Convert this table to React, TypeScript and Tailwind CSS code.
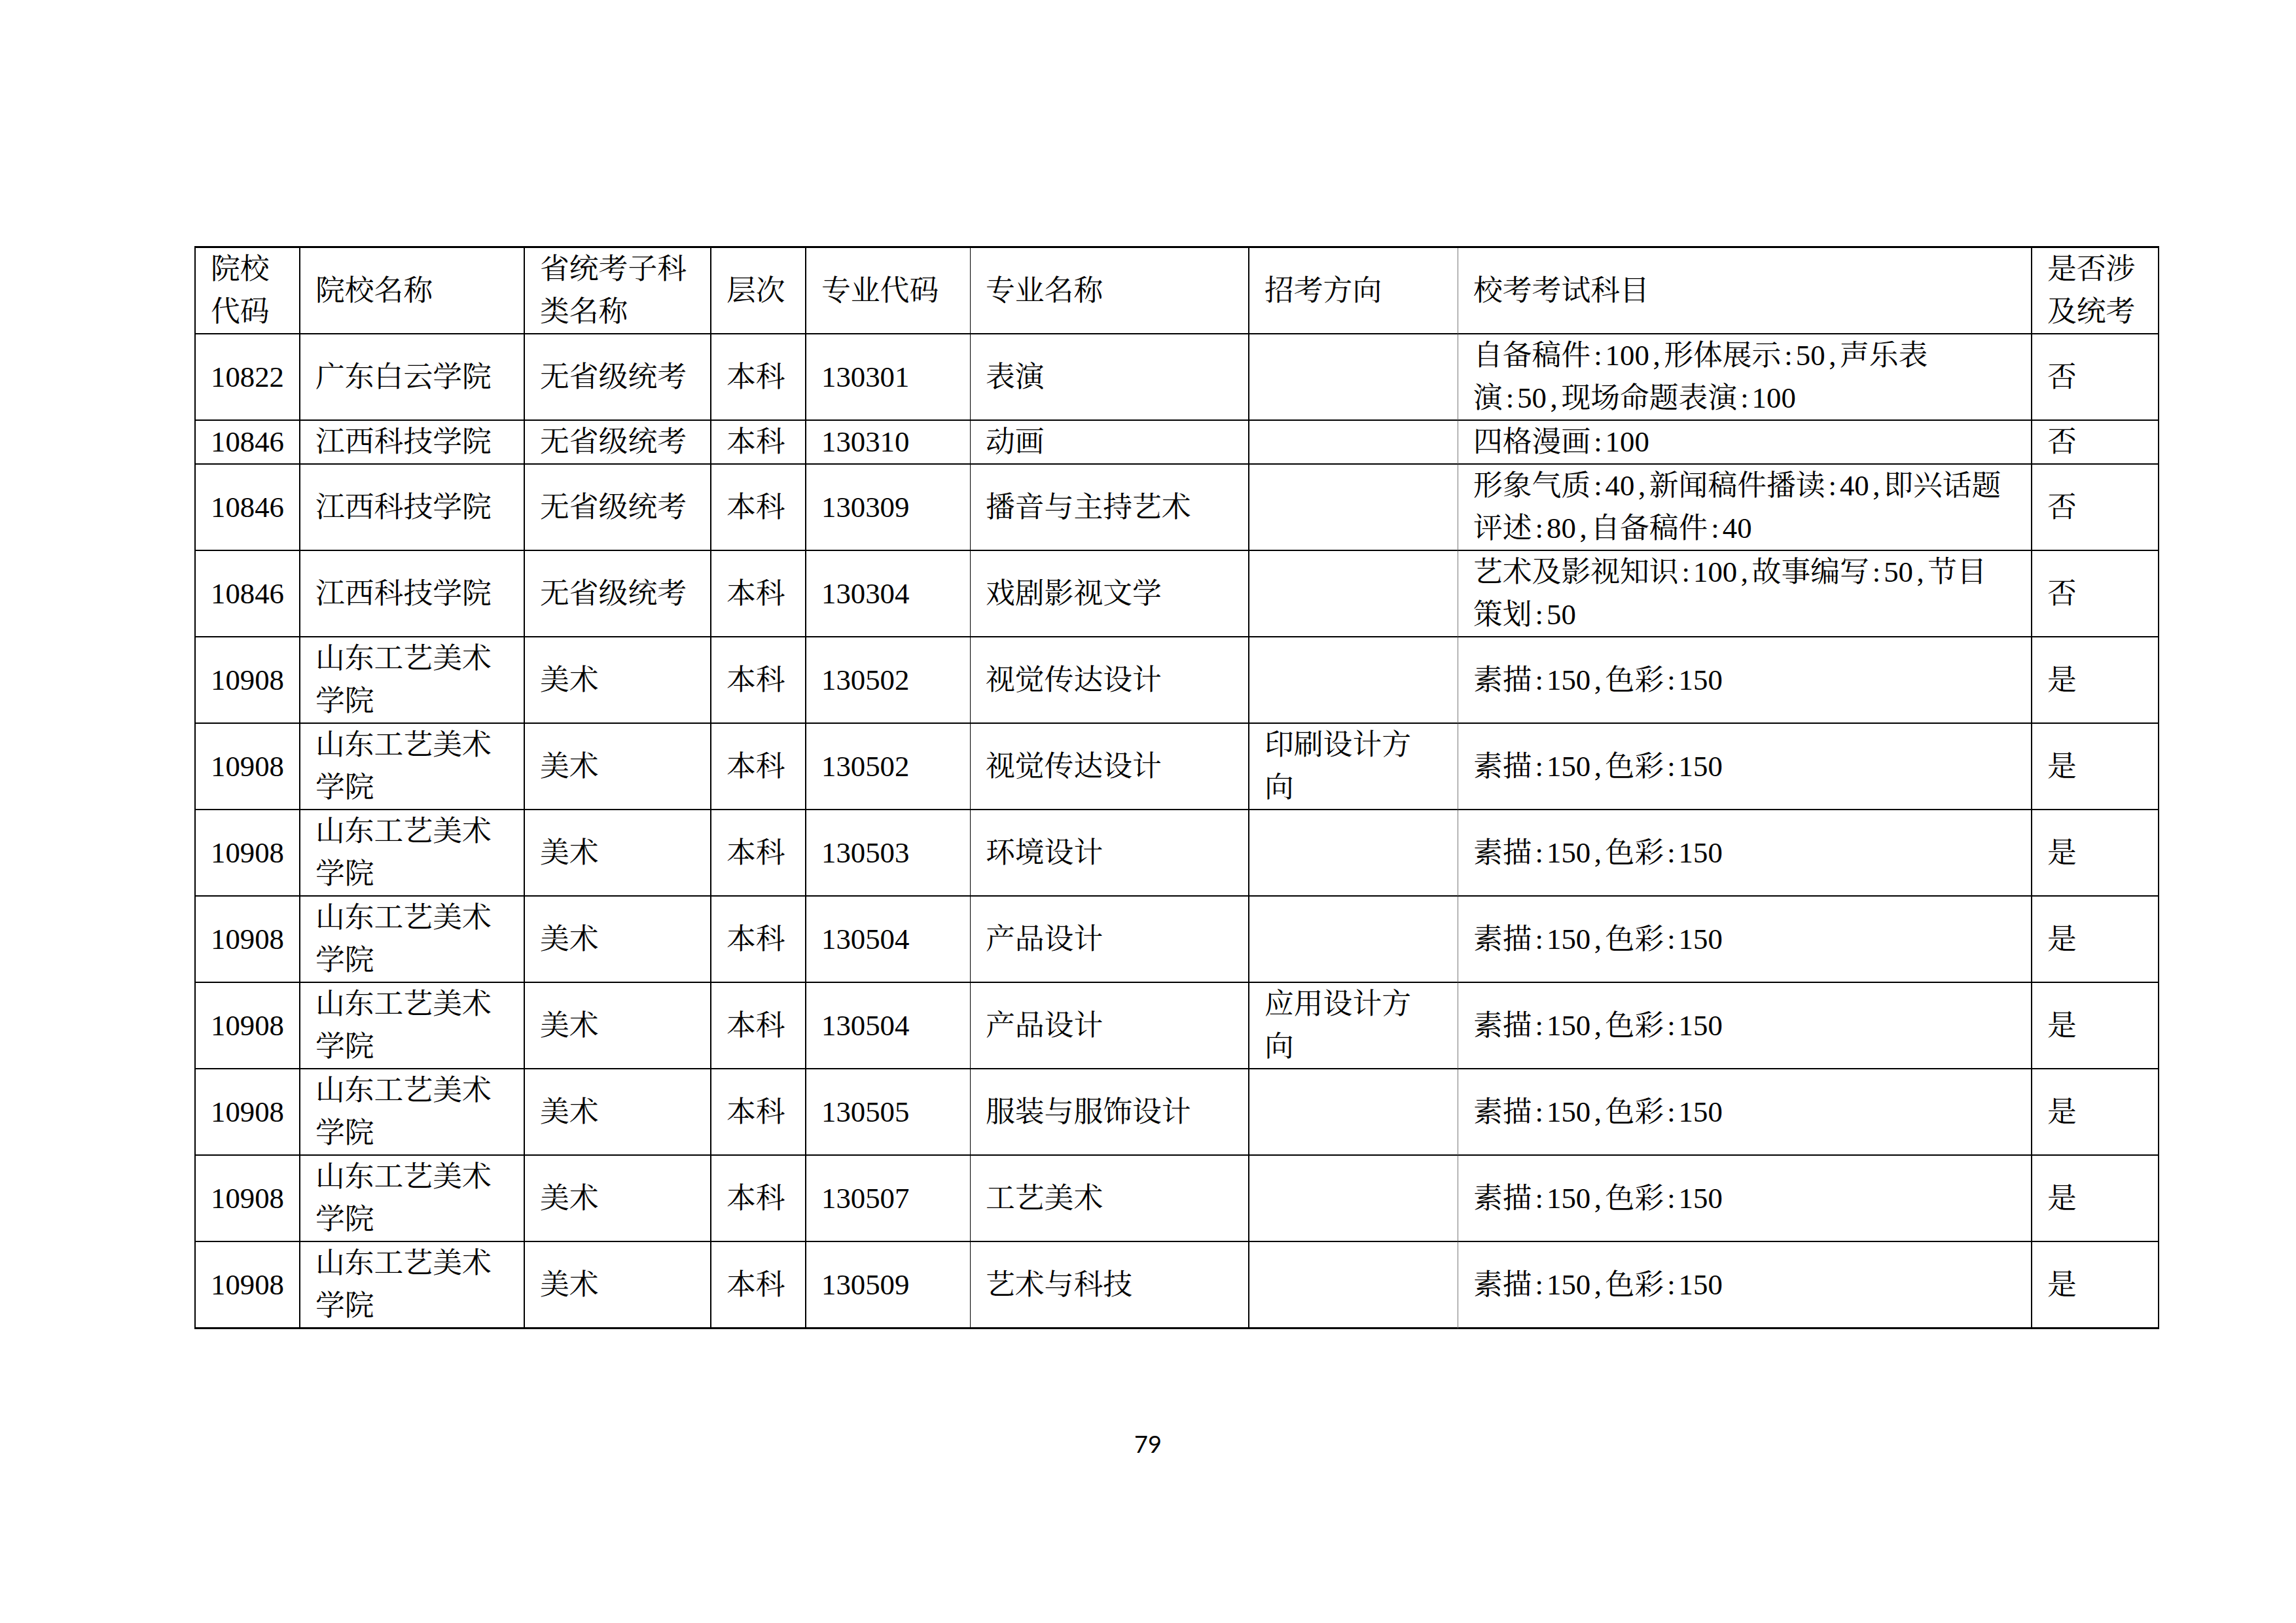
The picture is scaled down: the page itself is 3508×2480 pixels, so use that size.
import React from "react";

type Row = {
  code: string;
  school: React.ReactNode;
  cat: string;
  level: string;
  mcode: string;
  major: string;
  dir: React.ReactNode;
  subj: React.ReactNode;
  yn: string;
};

const P = ({ s }: { s: string }) => {
  const parts = s.split(/([:,])/);
  return (
    <>
      {parts.map((p, i) =>
        p === ":" || p === "," ? (
          <span key={i} className="inline-block w-[22.4px] text-center">
            {p}
          </span>
        ) : (
          <React.Fragment key={i}>{p}</React.Fragment>
        )
      )}
    </>
  );
};

const SD = (
  <>
    山东工艺美术
    <br />
    学院
  </>
);

const ART = <P s="素描:150,色彩:150" />;

const rows: Row[] = [
  {
    code: "10822",
    school: "广东白云学院",
    cat: "无省级统考",
    level: "本科",
    mcode: "130301",
    major: "表演",
    dir: "",
    subj: (
      <>
        <P s="自备稿件:100,形体展示:50,声乐表" />
        <br />
        <P s="演:50,现场命题表演:100" />
      </>
    ),
    yn: "否",
  },
  {
    code: "10846",
    school: "江西科技学院",
    cat: "无省级统考",
    level: "本科",
    mcode: "130310",
    major: "动画",
    dir: "",
    subj: <P s="四格漫画:100" />,
    yn: "否",
  },
  {
    code: "10846",
    school: "江西科技学院",
    cat: "无省级统考",
    level: "本科",
    mcode: "130309",
    major: "播音与主持艺术",
    dir: "",
    subj: (
      <>
        <P s="形象气质:40,新闻稿件播读:40,即兴话题" />
        <br />
        <P s="评述:80,自备稿件:40" />
      </>
    ),
    yn: "否",
  },
  {
    code: "10846",
    school: "江西科技学院",
    cat: "无省级统考",
    level: "本科",
    mcode: "130304",
    major: "戏剧影视文学",
    dir: "",
    subj: (
      <>
        <P s="艺术及影视知识:100,故事编写:50,节目" />
        <br />
        <P s="策划:50" />
      </>
    ),
    yn: "否",
  },
  { code: "10908", school: SD, cat: "美术", level: "本科", mcode: "130502", major: "视觉传达设计", dir: "", subj: ART, yn: "是" },
  {
    code: "10908",
    school: SD,
    cat: "美术",
    level: "本科",
    mcode: "130502",
    major: "视觉传达设计",
    dir: (
      <>
        印刷设计方
        <br />向
      </>
    ),
    subj: ART,
    yn: "是",
  },
  { code: "10908", school: SD, cat: "美术", level: "本科", mcode: "130503", major: "环境设计", dir: "", subj: ART, yn: "是" },
  { code: "10908", school: SD, cat: "美术", level: "本科", mcode: "130504", major: "产品设计", dir: "", subj: ART, yn: "是" },
  {
    code: "10908",
    school: SD,
    cat: "美术",
    level: "本科",
    mcode: "130504",
    major: "产品设计",
    dir: (
      <>
        应用设计方
        <br />向
      </>
    ),
    subj: ART,
    yn: "是",
  },
  { code: "10908", school: SD, cat: "美术", level: "本科", mcode: "130505", major: "服装与服饰设计", dir: "", subj: ART, yn: "是" },
  { code: "10908", school: SD, cat: "美术", level: "本科", mcode: "130507", major: "工艺美术", dir: "", subj: ART, yn: "是" },
  { code: "10908", school: SD, cat: "美术", level: "本科", mcode: "130509", major: "艺术与科技", dir: "", subj: ART, yn: "是" },
];

const base = "border-b-2 border-black pl-[23px] pr-2 align-middle whitespace-nowrap";
const cN = base + " border-r-2";
const cThin = base + " border-r border-r-black";
const cGray = base + " border-r border-r-[#777]";

function Cells({ r, last }: { r: Row; last?: boolean }) {
  const b = last ? " border-b-[3px]" : "";
  return (
    <>
      <td className={cN + b}>{r.code}</td>
      <td className={cN + b}>{r.school}</td>
      <td className={cN + b}>{r.cat}</td>
      <td className={cN + b}>{r.level}</td>
      <td className={cThin + b}>{r.mcode}</td>
      <td className={cN + b}>{r.major}</td>
      <td className={cGray + b}>{r.dir}</td>
      <td className={cN + b}>{r.subj}</td>
      <td className={cN + b}>{r.yn}</td>
    </>
  );
}

export default function App() {
  return (
    <div className="w-[3508px] h-[2480px] bg-white text-black overflow-hidden">
      <div className="pt-[376px] pl-[297px]">
        <table className="table-fixed w-[3000px] border-separate border-spacing-0 border-t-[3px] border-l-2 border-black font-['Liberation_Serif','Noto_Serif_CJK_SC','Noto_Sans_CJK_SC',serif] text-[44.8px] leading-[65px]">
          <colgroup>
            <col className="w-[160px]" />
            <col className="w-[343px]" />
            <col className="w-[285px]" />
            <col className="w-[145px]" />
            <col className="w-[251px]" />
            <col className="w-[426px]" />
            <col className="w-[319px]" />
            <col className="w-[877px]" />
            <col className="w-[194px]" />
          </colgroup>
          <tbody>
            <tr>
              <td className={cN}>
                院校
                <br />
                代码
              </td>
              <td className={cN}>院校名称</td>
              <td className={cN}>
                省统考子科
                <br />
                类名称
              </td>
              <td className={cN}>层次</td>
              <td className={cThin}>专业代码</td>
              <td className={cN}>专业名称</td>
              <td className={cGray}>招考方向</td>
              <td className={cN}>校考考试科目</td>
              <td className={cN}>
                是否涉
                <br />
                及统考
              </td>
            </tr>
            {rows.map((r, i) => (
              <tr key={i}>
                <Cells r={r} last={i === rows.length - 1} />
              </tr>
            ))}
          </tbody>
        </table>
      </div>
      <div className="mt-[157px] text-center font-['Lato','Open_Sans',sans-serif] text-[36px] leading-none">
        79
      </div>
    </div>
  );
}
